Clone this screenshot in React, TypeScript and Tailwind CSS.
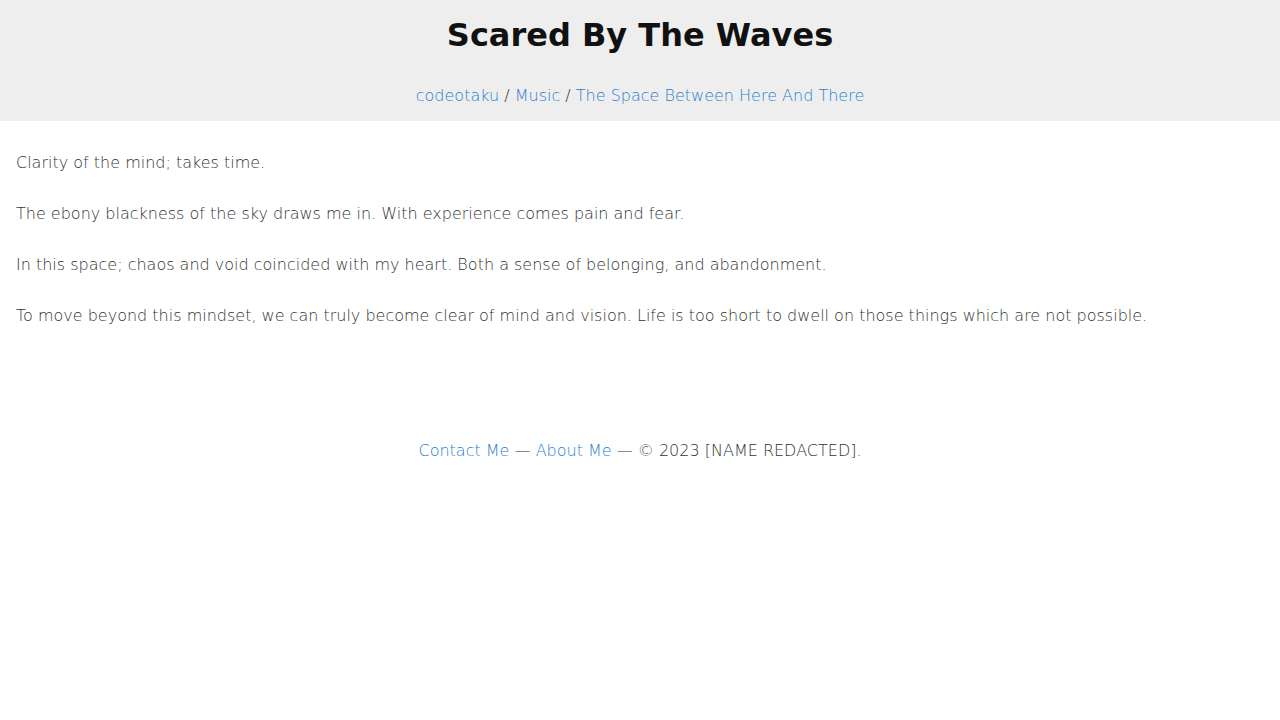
export default function App() {
  const text = 'text-[#333] text-[16px] leading-[25.6px] font-extralight';
  const link = 'text-[#2a80cc]';
  return (
    <div className="min-h-[720px] bg-white font-['DejaVu_Sans',sans-serif]">
      <header className="bg-[#eee] pt-[10px] pb-[12px] text-center">
        <h1 className="text-[32px] font-bold leading-[51px] text-[#111]">
          Scared By The Waves
        </h1>
        <nav className={`mt-[22px] ${text} text-[#222]`}>
          <a href="#" className={link}>codeotaku</a>
          {' / '}
          <a href="#" className={link}>Music</a>
          {' / '}
          <a href="#" className={link}>The Space Between Here And There</a>
        </nav>
      </header>
      <main className={`px-4 pt-[29px] ${text} flex flex-col gap-[25.6px]`}>
        <p>Clarity of the mind; takes time.</p>
        <p>The ebony blackness of the sky draws me in. With experience comes pain and fear.</p>
        <p>In this space; chaos and void coincided with my heart. Both a sense of belonging, and abandonment.</p>
        <p>
          To move beyond this mindset, we can truly become clear of mind and vision. Life is too short to dwell on
          those things which are not possible.
        </p>
      </main>
      <footer className={`mt-[109px] text-center ${text}`}>
        <a href="#" className={link}>Contact Me</a>
        {' — '}
        <a href="#" className={link}>About Me</a>
        {' — © 2023 [NAME REDACTED].'}
      </footer>
    </div>
  );
}
